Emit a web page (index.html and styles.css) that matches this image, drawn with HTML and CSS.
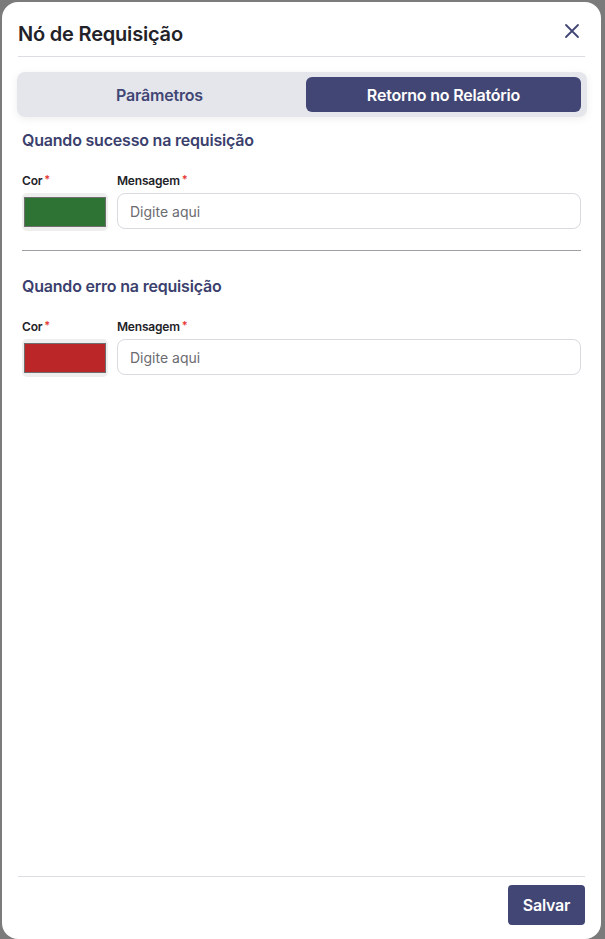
FILE: index.html
```html
<!DOCTYPE html>
<html lang="pt-BR">
<head>
<meta charset="utf-8">
<title>Nó de Requisição</title>
<link rel="stylesheet" href="styles.css">
</head>
<body>
<div class="modal">
  <div class="modal-header">
    <h1 class="modal-title">Nó de Requisição</h1>
    <button class="close-btn" aria-label="Fechar">
      <svg width="16" height="16" viewBox="0 0 16 16"><path d="M2 2 L14 14 M14 2 L2 14" stroke="#414675" stroke-width="1.8" stroke-linecap="round" fill="none"/></svg>
    </button>
  </div>
  <div class="modal-body">
    <div class="tabs">
      <div class="tab">Parâmetros</div>
      <div class="tab active">Retorno no Relatório</div>
    </div>
    <div class="section">
      <h2 class="section-title">Quando sucesso na requisição</h2>
      <div class="field-row">
        <div class="field field-color">
          <label class="label">Cor<span class="req">*</span></label>
          <div class="swatch"><div class="swatch-inner green"></div></div>
        </div>
        <div class="field field-msg">
          <label class="label">Mensagem<span class="req">*</span></label>
          <input class="text-input" type="text" placeholder="Digite aqui">
        </div>
      </div>
    </div>
    <hr class="section-divider">
    <div class="section">
      <h2 class="section-title second">Quando erro na requisição</h2>
      <div class="field-row">
        <div class="field field-color">
          <label class="label">Cor<span class="req">*</span></label>
          <div class="swatch"><div class="swatch-inner red"></div></div>
        </div>
        <div class="field field-msg">
          <label class="label">Mensagem<span class="req">*</span></label>
          <input class="text-input" type="text" placeholder="Digite aqui">
        </div>
      </div>
    </div>
  </div>
  <div class="modal-footer">
    <button class="save-btn">Salvar</button>
  </div>
</div>
</body>
</html>
```
FILE: styles.css
```css
* { box-sizing: border-box; }
html, body { margin: 0; height: 100%; }
body {
  background: #7b7b7c;
  padding: 2px 4px 0 2px;
  font-family: Inter, "Noto Sans", "Liberation Sans", sans-serif;
  overflow: hidden;
}
.modal {
  background: #ffffff;
  height: 937px;
  border-radius: 16px;
  padding: 0 16px;
  display: flex;
  flex-direction: column;
}
.modal-header {
  display: flex;
  align-items: center;
  justify-content: space-between;
  padding: 18px 0 8px;
  border-bottom: 1px solid #dcdce2;
}
.modal-title {
  margin: 0;
  font-size: 20px;
  line-height: 28px;
  font-weight: 600;
  color: #222228;
  letter-spacing: -0.2px;
}
.close-btn {
  background: none;
  border: none;
  padding: 0;
  width: 16px;
  height: 16px;
  margin-right: 5px;
  margin-top: -6px;
  display: flex;
}
.modal-body {
  flex: 1;
  padding-top: 15px;
}
.tabs {
  display: flex;
  gap: 9px;
  padding: 5px 6px 5px 5px;
  background: #e5e6eb;
  border-radius: 8px;
  box-shadow: 0 2px 8px rgba(0,0,0,0.07);
  margin-left: -1px;
  margin-right: -2px;
}
.tab {
  flex: 1;
  height: 35px;
  display: flex;
  align-items: center;
  justify-content: center;
  font-size: 16px;
  font-weight: 600;
  color: #414675;
  border-radius: 6px;
  letter-spacing: -0.2px;
}
.tab.active {
  background: #414675;
  color: #ffffff;
}
.section {
  padding: 0 4px;
}
.section-title {
  margin: 11px 0 0;
  font-size: 16px;
  line-height: 24px;
  font-weight: 600;
  color: #3b3f6d;
  letter-spacing: -0.2px;
}
.section-title.second { margin-top: 23px; }
.field-row {
  display: flex;
  gap: 9px;
  margin-top: 21px;
}
.field { display: flex; flex-direction: column; }
.field-color { width: 86px; }
.field-msg { flex: 1; }
.label {
  font-size: 12px;
  line-height: 16px;
  font-weight: 600;
  color: #222228;
  margin-bottom: 4px;
  letter-spacing: -0.2px;
}
.req {
  color: #e53935;
  margin-left: 2px;
  font-size: 11px;
  vertical-align: top;
  position: relative;
  top: -2px;
}
.swatch {
  width: 86px;
  height: 38px;
  background: #eeeeef;
  border-radius: 5px;
  padding: 4px 2px 4px 2px;
}
.swatch-inner {
  width: 82px;
  height: 30px;
  border: 1px solid #6e6e6e;
}
.swatch-inner.green { background: #2e7333; }
.swatch-inner.red { background: #bb2628; }
.text-input {
  height: 36px;
  border: 1px solid #d9d9df;
  border-radius: 8px;
  padding: 0 12px;
  font-family: inherit;
  font-size: 14px;
  color: #222;
  outline: none;
  background: #fff;
}
.text-input::placeholder { color: #6b6b70; }
.section-divider {
  margin: 19px 4px 0;
  border: none;
  border-top: 1px solid #a0a0a4;
}
.modal-footer {
  border-top: 1px solid #dcdce2;
  padding: 8px 0 14px;
  display: flex;
  justify-content: flex-end;
}
.save-btn {
  height: 40px;
  width: 77px;
  background: #414675;
  color: #ffffff;
  border: none;
  border-radius: 4px;
  font-family: inherit;
  font-size: 16px;
  font-weight: 600;
  letter-spacing: -0.2px;
}
```
